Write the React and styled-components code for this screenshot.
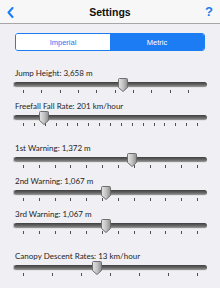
import styled, { createGlobalStyle } from "styled-components";

const GlobalStyle = createGlobalStyle`
    html, body {
        margin: 0;
        padding: 0;
        background: #efeff4;
    }
    #root {
        width: 220px;
        height: 288px;
        overflow: hidden;
    }
`;

const sliders = [
    { label: "Jump Height: 3,658 m", value: 122.5, ticks: 10, tickEnd: 188, group: 0 },
    { label: "Freefall Fall Rate: 201 km/hour", value: 44, ticks: 17, tickEnd: 197, group: 0 },
    { label: "1st Warning: 1,372 m", value: 131.5, ticks: 12, tickEnd: 197, group: 1 },
    { label: "2nd Warning: 1,067 m", value: 105.5, ticks: 12, tickEnd: 197, group: 1 },
    { label: "3rd Warning: 1,067 m", value: 105.5, ticks: 12, tickEnd: 197, group: 1 },
    { label: "Canopy Descent Rates: 13 km/hour", value: 97, ticks: 7, tickEnd: 197, group: 2 },
];

const TRACK_LEFT = 13;

const Thumb = () => (
    <ThumbBox>
        <svg width="10" height="14" viewBox="0 0 10 14">
            <defs>
                <linearGradient id="thumbFill" x1="0" y1="0" x2="1" y2="0">
                    <stop offset="0" stopColor="#e4e4e4" />
                    <stop offset="0.5" stopColor="#c4c4c4" />
                    <stop offset="1" stopColor="#8e8e8e" />
                </linearGradient>
            </defs>
            <path
                d="M1.5 0.5 H8.5 Q9.5 0.5 9.5 1.5 V9.5 L5 13.5 L0.5 9.5 V1.5 Q0.5 0.5 1.5 0.5 Z"
                fill="url(#thumbFill)"
                stroke="#6e6e6e"
                strokeWidth="1"
            />
        </svg>
    </ThumbBox>
);

const Slider = ({ label, value, ticks, tickEnd }) => {
    return (
        <SliderBlock>
            <SliderLabel>{label}</SliderLabel>
            <TrackArea>
                <Track />
                <TickRow $end={tickEnd}>
                    {Array.from({ length: ticks }).map((_, i) => (
                        <Tick key={i} />
                    ))}
                </TickRow>
                <ThumbSlot style={{ left: value - TRACK_LEFT - 5 }}>
                    <Thumb />
                </ThumbSlot>
            </TrackArea>
        </SliderBlock>
    );
};

const App = () => {
    const groups = [0, 1, 2].map((g) => sliders.filter((s) => s.group === g));
    return (
        <>
            <GlobalStyle />
            <Screen>
                <NavBar>
                    <NavButton>
                        <svg width="7" height="11" viewBox="0 0 7 11">
                            <path d="M5.5 1 L1.5 5.5 L5.5 10" fill="none" stroke="#1b7cf4" strokeWidth="2" strokeLinecap="round" strokeLinejoin="round" />
                        </svg>
                    </NavButton>
                    <NavTitle>Settings</NavTitle>
                    <HelpButton>?</HelpButton>
                </NavBar>
                <Content>
                    <Segmented>
                        <Segment>Imperial</Segment>
                        <Segment $active>Metric</Segment>
                    </Segmented>
                    <SliderList>
                        {groups.map((items, gi) => (
                            <SliderGroup key={gi}>
                                {items.map((s) => (
                                    <Slider key={s.label} {...s} />
                                ))}
                            </SliderGroup>
                        ))}
                    </SliderList>
                </Content>
            </Screen>
        </>
    );
};

export default App;

const Screen = styled.div`
    width: 220px;
    height: 288px;
    background: #efeff4;
    display: flex;
    flex-direction: column;
`;

const NavBar = styled.div`
    height: 23px;
    background: #f7f7f7;
    border-bottom: 1px solid #a7a7aa;
    display: flex;
    align-items: center;
    justify-content: space-between;
    padding: 0 7px 0 7px;
`;

const NavButton = styled.div`
    width: 12px;
    display: flex;
    align-items: center;
    padding-top: 1px;
`;

const NavTitle = styled.span`
    font-family: "Liberation Sans", Arial, sans-serif;
    font-weight: 700;
    font-size: 10.5px;
    color: #111;
`;

const HelpButton = styled.span`
    width: 12px;
    text-align: right;
    font-family: "Liberation Sans", Arial, sans-serif;
    font-weight: 700;
    font-size: 13px;
    color: #1b7cf4;
`;

const Content = styled.div`
    display: flex;
    flex-direction: column;
    padding: 9px 0 0 0;
`;

const Segmented = styled.div`
    margin: 0 15px 0 15px;
    height: 18px;
    display: flex;
    border: 1px solid #1b7cf4;
    border-radius: 3px;
    overflow: hidden;
    box-sizing: border-box;
`;

const Segment = styled.div`
    flex: 1;
    display: flex;
    align-items: center;
    justify-content: center;
    font-family: "Liberation Sans", Arial, sans-serif;
    font-size: 7.5px;
    color: ${(p) => (p.$active ? "#ffffff" : "#1b7cf4")};
    background: ${(p) => (p.$active ? "#1b7cf4" : "#ffffff")};
`;

const SliderList = styled.div`
    display: flex;
    flex-direction: column;
    gap: 9px;
    margin-top: 17px;
`;

const SliderGroup = styled.div`
    display: flex;
    flex-direction: column;
`;

const SliderBlock = styled.div`
    height: 33px;
    display: flex;
    flex-direction: column;
`;

const SliderLabel = styled.div`
    height: 10px;
    line-height: 10px;
    padding-left: 15px;
    font-family: "Lato", "DejaVu Sans", sans-serif;
    font-size: 8px;
    color: #1e1e1e;
    white-space: nowrap;
`;

const TrackArea = styled.div`
    position: relative;
    margin: 0 13px;
    height: 23px;
`;

const Track = styled.div`
    margin-top: 3.5px;
    height: 5px;
    border-radius: 3px;
    background: linear-gradient(#3f3f3f, #6a6a6a 60%, #9c9c9c);
    box-shadow: inset 1px 0 0 #cfcfcf, 0 0.5px 0 #d7d7d7;
`;

const TickRow = styled.div`
    display: flex;
    justify-content: space-between;
    margin-top: 3px;
    padding-left: 10px;
    width: ${(p) => p.$end - TRACK_LEFT - 10 + 1}px;
`;

const Tick = styled.div`
    width: 1px;
    height: 3px;
    background: #505050;
`;

const ThumbSlot = styled.div`
    position: absolute;
    top: 0;
`;

const ThumbBox = styled.div`
    display: flex;
`;
